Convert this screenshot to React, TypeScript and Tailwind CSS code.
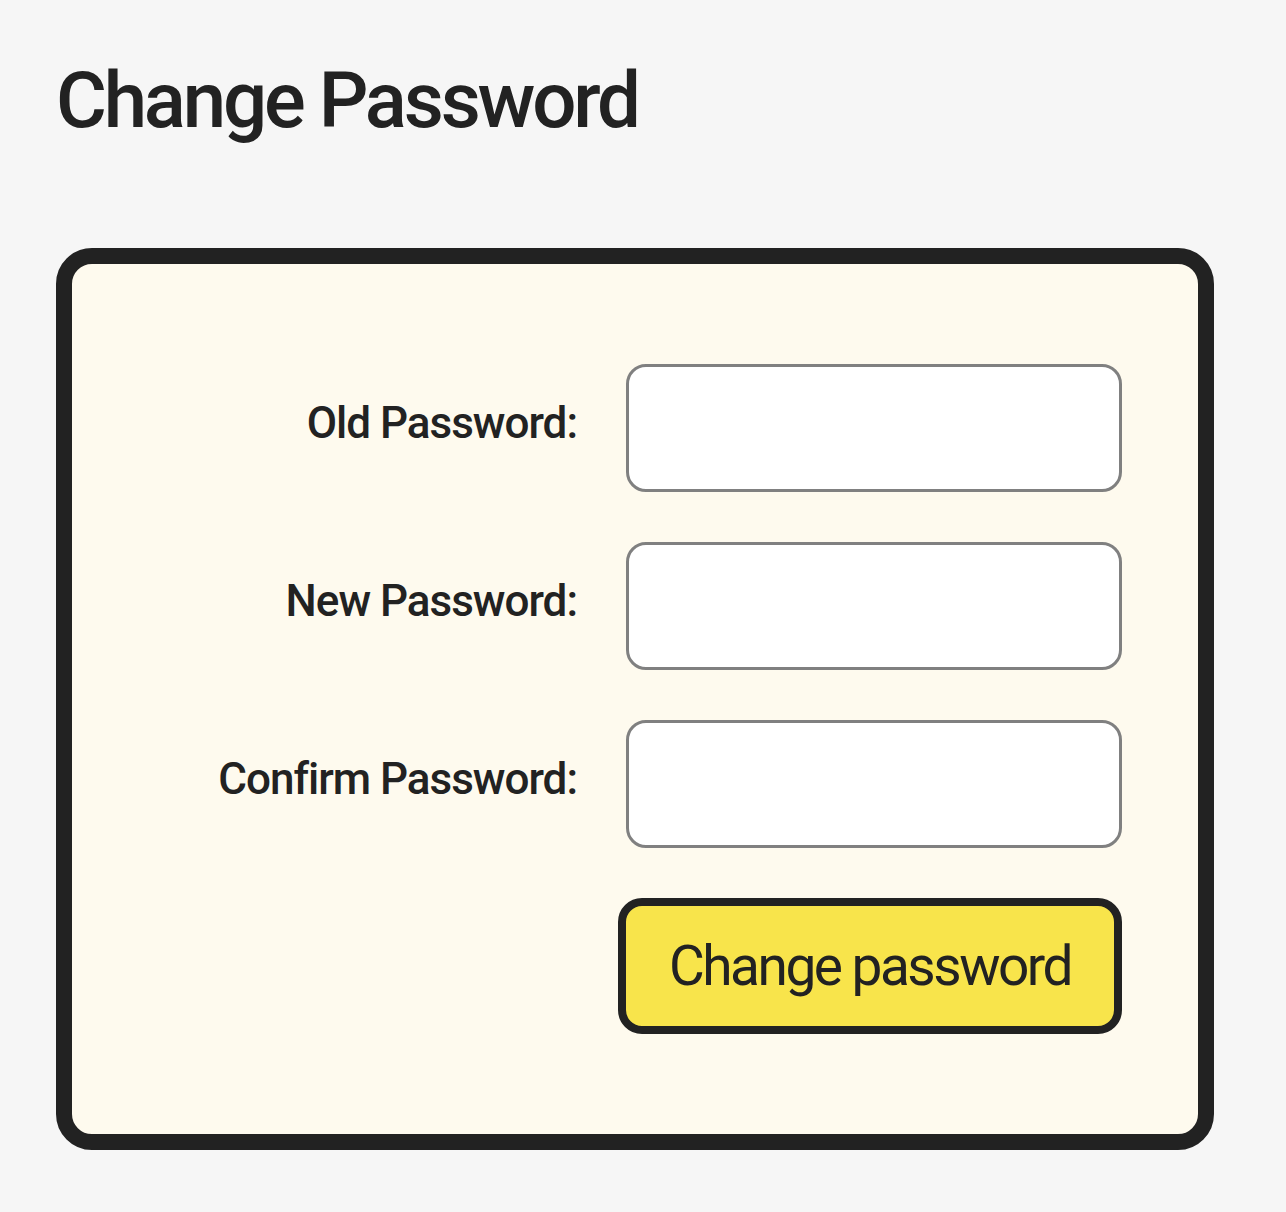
export default function App() {
  const fields = ['Old Password:', 'New Password:', 'Confirm Password:'];

  return (
    <div className="min-h-screen bg-[#f6f6f6] px-[56px] pt-[62px] pb-[62px] font-['Roboto','Liberation_Sans',sans-serif] text-[#222222]">
      <h1 className="text-[78px] leading-none font-medium tracking-[-3.2px]">Change Password</h1>

      <div className="mt-[108px] w-[1158px] rounded-[36px] border-[16px] border-[#222222] bg-[#fefaee] py-[100px] pr-[76px]">
        <form
          className="grid grid-cols-[1fr_496px] items-center gap-x-[49px] gap-y-[50px]"
          onSubmit={(e) => e.preventDefault()}
        >
          {fields.map((label) => (
            <label key={label} className="contents">
              <span className="mb-[10px] text-right text-[44px] leading-none font-medium tracking-[-1px]">{label}</span>
              <input
                type="password"
                className="h-[128px] w-full rounded-[20px] border-[3px] border-[#808080] bg-white px-5 text-[40px] outline-none"
              />
            </label>
          ))}
          <span />
          <button
            type="submit"
            className="-ml-[8px] h-[136px] w-[504px] rounded-[24px] border-[8px] border-[#222222] bg-[#f8e44b] text-[55px] leading-none tracking-[-2.5px] text-[#222222]"
          >
            Change password
          </button>
        </form>
      </div>
    </div>
  );
}
